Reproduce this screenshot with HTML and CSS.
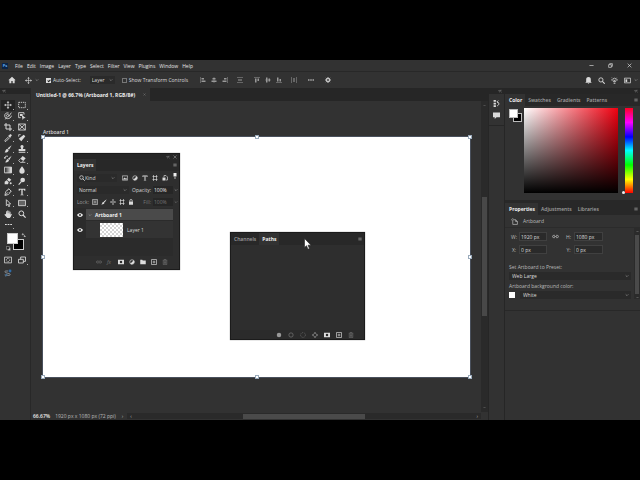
FILE: index.html
```html
<!DOCTYPE html>
<html lang="en">
<head>
<meta charset="UTF-8">
<meta name="viewport" content="width=device-width, initial-scale=1.0">
<title>Untitled-1 @ 66.7%</title>
<link rel="stylesheet" href="styles.css">
</head>
<body>
    <!-- icon set, 12x12 grid -->
    <svg class="sprite" aria-hidden="true">
        <symbol id="i-home" viewBox="0 0 12 12"><path fill="currentColor" d="M6 1L.5 6.5H2V11h3V7.500h2V11h3V6.500h1.500z"/></symbol>
        <symbol id="i-move" viewBox="0 0 12 12"><path fill="none" stroke="currentColor" d="M6 2v8M2 6h8"/><path fill="currentColor" d="M6 0l2 2.700H4zM6 12l2-2.700H4zM0 6l2.700-2v4zM12 6L9.300 4v4z"/></symbol>
        <symbol id="i-down" viewBox="0 0 12 12"><path fill="none" stroke="currentColor" stroke-width="1.800" d="M2 4l4 4 4-4"/></symbol>
        <symbol id="i-align-left" viewBox="0 0 12 12"><path fill="currentColor" d="M1 0h1v12H1zM3 2h5v3H3zM3 7h8v3H3z"/></symbol>
        <symbol id="i-align-center" viewBox="0 0 12 12"><path fill="currentColor" d="M5.500 0h1v12h-1zM3 2h6v3H3zM1 7h10v3H1z"/></symbol>
        <symbol id="i-align-right" viewBox="0 0 12 12"><path fill="currentColor" d="M10 0h1v12h-1zM4 2h5v3H4zM1 7h8v3H1z"/></symbol>
        <symbol id="i-spread" viewBox="0 0 12 12"><path fill="currentColor" d="M0 1h12v1H0zM2 5h8v2H2zM0 10h12v1H0z"/></symbol>
        <symbol id="i-align-top" viewBox="0 0 12 12"><path fill="currentColor" d="M0 1h12v1H0zM2 3h3v8H2zM7 3h3v5H7z"/></symbol>
        <symbol id="i-align-middle" viewBox="0 0 12 12"><path fill="currentColor" d="M0 5.500h12v1H0zM2 1h3v10H2zM7 3h3v6H7z"/></symbol>
        <symbol id="i-align-bottom" viewBox="0 0 12 12"><path fill="currentColor" d="M0 10h12v1H0zM2 1h3v8H2zM7 4h3v5H7z"/></symbol>
        <symbol id="i-spread-h" viewBox="0 0 12 12"><path fill="currentColor" d="M1 0h1v12H1zM5 2h2v8H5zM10 0h1v12h-1z"/></symbol>
        <symbol id="i-dots" viewBox="0 0 12 12"><path fill="currentColor" d="M0 5h3v2H0zM4.500 5h3v2h-3zM9 5h3v2H9z"/></symbol>
        <symbol id="i-gear" viewBox="0 0 12 12"><circle cx="6" cy="6" r="3" fill="none" stroke="currentColor" stroke-width="2"/><path stroke="currentColor" stroke-width="1.800" d="M6 0v2.500M6 9.500V12M0 6h2.500M9.500 6H12M1.800 1.800l1.700 1.700M8.500 8.500l1.700 1.700M10.200 1.800L8.500 3.500M3.500 8.500l-1.700 1.700"/></symbol>
        <symbol id="i-bell" viewBox="0 0 12 12"><path fill="currentColor" d="M6 0c3 0 4 2 4 4.500V8l1.500 2H.5L2 8V4.500C2 2 3 0 6 0zM4.500 10.500h3L6 12z"/></symbol>
        <symbol id="i-search" viewBox="0 0 12 12"><circle cx="5" cy="5" r="3.600" fill="none" stroke="currentColor" stroke-width="1.500"/><path stroke="currentColor" stroke-width="1.800" d="M7.500 7.500l4 4"/></symbol>
        <symbol id="i-bulb" viewBox="0 0 12 12"><path fill="none" stroke="currentColor" stroke-width="1.300" d="M4.500 8.500c0-1-1.500-2-1.500-3.500a3 3 0 016 0c0 1.500-1.500 2.500-1.500 3.500zM4.500 11h3M6 8V5M0 5h1.500M10.500 5H12M1.500 1l1 1M10.500 1l-1 1"/></symbol>
        <symbol id="i-layout" viewBox="0 0 12 12"><path fill="none" stroke="currentColor" stroke-width="1.300" d="M.7 2h10.600v8H.7z"/><path fill="currentColor" d="M2.500 4h3v4.500h-3z"/></symbol>
        <symbol id="i-min" viewBox="0 0 12 12"><path fill="currentColor" d="M1 5.500h10V7H1z"/></symbol>
        <symbol id="i-restore" viewBox="0 0 12 12"><path fill="none" stroke="currentColor" stroke-width="1.500" d="M1.500 4H8v6.500H1.500zM4 4V1.500h6.500V8H8"/></symbol>
        <symbol id="i-close" viewBox="0 0 12 12"><path stroke="currentColor" stroke-width="1.500" d="M1.500 1.500l9 9M10.500 1.500l-9 9"/></symbol>
        <symbol id="i-menu" viewBox="0 0 12 12"><path fill="currentColor" d="M1 2h10v1.500H1zM1 5.300h10v1.500H1zM1 8.600h10v1.500H1z"/></symbol>
        <symbol id="i-arrows" viewBox="0 0 12 12"><path fill="none" stroke="currentColor" stroke-width="1.600" d="M5.500 2.500L2 6l3.500 3.500M10.500 2.500L7 6l3.500 3.500"/></symbol>

        <symbol id="i-marquee" viewBox="0 0 12 12"><path fill="none" stroke="currentColor" stroke-width="1.300" stroke-dasharray="2 1.200" d="M1 2h10v8H1z"/></symbol>
        <symbol id="i-lasso" viewBox="0 0 12 12"><path fill="none" stroke="currentColor" stroke-width="1.300" d="M7 1.500C3 .5 1 3 1 5.500S3 10 5 10c3 0 6-1.500 6-4.500M3 6c1-3 4-3 4-1S5 8 4 7M7 7l4-6M4 8l-2 3"/></symbol>
        <symbol id="i-select" viewBox="0 0 12 12"><path fill="none" stroke="currentColor" stroke-width="1.300" d="M4 8.500H1V1h8v3"/><path fill="currentColor" d="M3 3h4v3H3zM5.500 4l6 5-3 .4L7 12z"/></symbol>
        <symbol id="i-crop" viewBox="0 0 12 12"><path fill="none" stroke="currentColor" stroke-width="1.500" d="M3 0v9h9M0 3h9v9"/></symbol>
        <symbol id="i-frame" viewBox="0 0 12 12"><path fill="none" stroke="currentColor" stroke-width="1.300" d="M1 1.500h10v9H1zM1 1.500l10 9M11 1.500l-10 9"/></symbol>
        <symbol id="i-dropper" viewBox="0 0 12 12"><path fill="none" stroke="currentColor" stroke-width="1.300" d="M7 4L1.500 9.500V11H3l5.500-5.500"/><path fill="currentColor" d="M6 2.500l1.500-.2L9 .5c1.500-.7 3 1 2.500 2L9.700 4.500 9.500 6z"/></symbol>
        <symbol id="i-heal" viewBox="0 0 12 12"><path fill="currentColor" d="M8.500 1l2.500 2.500L5 11 1 7z"/><path fill="none" stroke="currentColor" stroke-width="1.200" d="M1 4V1h3"/></symbol>
        <symbol id="i-brush" viewBox="0 0 12 12"><path fill="currentColor" d="M11.500.5L7.500 7 5.500 5zM4.800 5.500L7 7.700C6.500 10.500 3.500 11.500.5 11c2-1 1.500-4.500 4.300-5.500z"/></symbol>
        <symbol id="i-stamp" viewBox="0 0 12 12"><path fill="currentColor" d="M6 0a2.300 2.300 0 012 3.500L7.300 6H11v3H1V6h3.700L4 3.500A2.300 2.300 0 016 0zM1 10h10v1.500H1z"/></symbol>
        <symbol id="i-history" viewBox="0 0 12 12"><path fill="currentColor" d="M11.500 1L8 7.500 6 5.700zM5.500 6L7.500 8c-.5 2.500-3 3.500-6 3 2-1 1.500-4 4-5z"/><path fill="none" stroke="currentColor" stroke-width="1.300" d="M1 5c0-3 3-4 5-3M0 3l1 2 2-1"/></symbol>
        <symbol id="i-eraser" viewBox="0 0 12 12"><path fill="currentColor" d="M7 1.500L11.500 5 8 9 3.500 5.500z"/><path fill="none" stroke="currentColor" stroke-width="1.200" d="M3.500 5.500L1 8.500 3.500 11H6l2-2M6 11h5"/></symbol>
        <linearGradient id="grad"><stop stop-color="#222"/><stop offset="1" stop-color="#eee"/></linearGradient>
        <symbol id="i-gradient" viewBox="0 0 12 12"><path fill="url(#grad)" stroke="currentColor" stroke-width="1.300" d="M.7 1.700h10.600v8.600H.7z"/></symbol>
        <symbol id="i-drop" viewBox="0 0 12 12"><path fill="currentColor" d="M6 .5c2 3 4 4.500 4 7a4 4 0 01-8 0c0-2.500 2-4 4-7z"/></symbol>
        <symbol id="i-bucket" viewBox="0 0 12 12"><path fill="currentColor" d="M7 1L4.500 4 8 7l3-3zM1 7l3-2 3 3-1 3H1z"/><circle cx="10" cy="9.500" r="1.500" fill="currentColor"/></symbol>
        <symbol id="i-dodge" viewBox="0 0 12 12"><circle cx="7" cy="4.500" r="3.500" fill="currentColor"/><path stroke="currentColor" stroke-width="1.600" d="M5 7l-4 4.500"/></symbol>
        <symbol id="i-pen" viewBox="0 0 12 12"><path fill="none" stroke="currentColor" stroke-width="1.300" d="M7 1l4 4-2 1c0 3-3 4.500-7.500 5C2 7 3 3 6 3zM1.500 11L6 6.500"/></symbol>
        <symbol id="i-type" viewBox="0 0 12 12"><path fill="currentColor" d="M1 1h10v3H9.500L9 2.500H7v7.500l1.500.3V11h-5v-.7L5 10V2.500H3L2.500 4H1z"/></symbol>
        <symbol id="i-path" viewBox="0 0 12 12"><path fill="none" stroke="currentColor" stroke-width="1.300" d="M3.500 1v9l2-2 1.500 3.500L8.500 11 7 7.500h3z"/></symbol>
        <symbol id="i-rect" viewBox="0 0 12 12"><path fill="#666" stroke="currentColor" stroke-width="1.300" d="M.7 2h10.600v8H.7z"/></symbol>
        <symbol id="i-hand" viewBox="0 0 12 12"><path fill="currentColor" d="M3 6V2h1.300v3h.5V.7h1.400V5h.5V1H8v4.300h.5V2.500h1.300V7l1-1.500 1 .7L10 10.500 8.500 12H5L.5 7l1-.8z"/></symbol>
        <symbol id="i-mask" viewBox="0 0 12 12"><path fill="none" stroke="currentColor" stroke-width="1.200" d="M.7 1.700h10.600v8.600H.7z"/><circle cx="6" cy="6" r="2.500" fill="none" stroke="currentColor" stroke-width="1.200" stroke-dasharray="1.500 .8"/></symbol>
        <symbol id="i-screen" viewBox="0 0 12 12"><path fill="none" stroke="currentColor" stroke-width="1.300" d="M4 5V1.500h7.300V8H8M.7 5H8v5.500H.7z"/></symbol>
        <symbol id="i-share" viewBox="0 0 12 12"><path fill="none" stroke="#9aa0a6" stroke-width="1.200" d="M6 3H2.500C1 3 1 5 2.500 5.500L8 7c2 .6 1.500 2.500 0 2.500H4M1 9l2 2"/><circle cx="9" cy="3" r="2.200" fill="#2f6ca8"/><circle cx="3.500" cy="9" r="1.800" fill="#456d92"/></symbol>
        <symbol id="i-swap" viewBox="0 0 12 12"><path fill="none" stroke="currentColor" stroke-width="1.500" d="M3 3c4 0 6 2 6 6M5 .5L2.500 3 5 5.500M6.500 7L9 9.500 11.500 7"/></symbol>
        <symbol id="i-default" viewBox="0 0 12 12"><path fill="#ddd" stroke="#222" d="M4 4h7v7H4z"/><path fill="#222" stroke="#ddd" d="M1 1h7v7H1z"/></symbol>

        <symbol id="i-image" viewBox="0 0 12 12"><path fill="none" stroke="currentColor" stroke-width="1.300" d="M.7 1.700h10.600v8.600H.7z"/><path fill="currentColor" d="M2 9l2.500-4L7 7l1.500-1.500L10 9z"/></symbol>
        <symbol id="i-adjust" viewBox="0 0 12 12"><circle cx="6" cy="6" r="4.500" fill="none" stroke="currentColor" stroke-width="1.300"/><path fill="currentColor" d="M9.500 2.500a5 5 0 01-7 7z"/></symbol>
        <symbol id="i-shape" viewBox="0 0 12 12"><path fill="none" stroke="currentColor" stroke-width="1.300" d="M3 0v12M9 0v12M1 3h10M1 9h10"/></symbol>
        <symbol id="i-smart" viewBox="0 0 12 12"><path fill="none" stroke="currentColor" stroke-width="1.300" d="M4 4V1h4l3 3v6H8"/><path fill="currentColor" d="M1 5h6v6H1z"/></symbol>
        <symbol id="i-toggle" viewBox="0 0 12 12"><path fill="#eee" d="M3 0h6v7H3z"/><path fill="#888" d="M4.500 7h3v5h-3z"/></symbol>
        <symbol id="i-grid" viewBox="0 0 12 12"><path fill="none" stroke="currentColor" stroke-width="1.200" d="M1 1h10v10H1z"/><path fill="currentColor" d="M3 3h2v2H3zM7 3h2v2H7zM5 5h2v2H5zM3 7h2v2H3zM7 7h2v2H7z"/></symbol>
        <symbol id="i-lock" viewBox="0 0 12 12"><path fill="none" stroke="currentColor" stroke-width="1.500" d="M3.500 5V3.500a2.500 2.500 0 015 0V5"/><path fill="currentColor" d="M2 5h8v6.500H2z"/></symbol>
        <symbol id="i-eye" viewBox="0 0 12 12"><path fill="currentColor" d="M0 6c3-5 9-5 12 0-3 5-9 5-12 0z"/><circle cx="6" cy="6" r="2.200" fill="#222"/><circle cx="6" cy="6" r=".8" fill="currentColor"/></symbol>
        <symbol id="i-link" viewBox="0 0 12 12"><path fill="none" stroke="currentColor" stroke-width="1.300" d="M5 8H3a2 2 0 010-4h2M7 4h2a2 2 0 010 4H7M4 6h4"/></symbol>
        <symbol id="i-addmask" viewBox="0 0 12 12"><path fill="currentColor" fill-rule="evenodd" d="M0 1.500h12v9H0zM6 3.500a2.500 2.500 0 100 5 2.500 2.500 0 000-5z"/></symbol>
        <symbol id="i-folder" viewBox="0 0 12 12"><path fill="currentColor" d="M.5 1.500h4l1 1.500h6v7.500H.5z"/></symbol>
        <symbol id="i-new" viewBox="0 0 12 12"><path fill="none" stroke="currentColor" stroke-width="1.300" d="M1 1h10v10H1zM6 3.300v5.400M3.300 6h5.400"/></symbol>
        <symbol id="i-trash" viewBox="0 0 12 12"><path fill="none" stroke="currentColor" stroke-width="1.200" d="M1.500 2.500h9M4.500 2.500V1h3v1.500M2.500 3v8.300h7V3M5 4.500v5M7 4.500v5"/></symbol>
        <symbol id="i-dot" viewBox="0 0 12 12"><circle cx="6" cy="6" r="4.500" fill="currentColor"/></symbol>
        <symbol id="i-ring" viewBox="0 0 12 12"><circle cx="6" cy="6" r="4.300" fill="none" stroke="currentColor" stroke-width="1.400"/></symbol>
        <symbol id="i-dashring" viewBox="0 0 12 12"><circle cx="6" cy="6" r="4.800" fill="none" stroke="currentColor" stroke-width="1.200" stroke-dasharray="2.200 1.500"/></symbol>
        <symbol id="i-workpath" viewBox="0 0 12 12"><path fill="none" stroke="currentColor" stroke-width="1.500" d="M6 1.500L10.500 6 6 10.500 1.500 6zM6 0v2M6 10v2M0 6h2M10 6h2"/></symbol>
        <symbol id="i-artboard" viewBox="0 0 12 12"><path fill="none" stroke="currentColor" stroke-width="1.200" d="M3 3h5l3 3v5H3zM8 3v3h3M0 3h1.500M3 0v1.500"/></symbol>
        <symbol id="i-steps" viewBox="0 0 12 12"><path fill="currentColor" d="M1 0h4v3H1zM1 4.500h4v3H1zM1 9h4v3H1z"/><path fill="none" stroke="currentColor" stroke-width="1.500" d="M7 10c4-1 4-6 0-7M9 1L7 3l2 2.500"/></symbol>
        <symbol id="i-comment" viewBox="0 0 12 12"><path fill="currentColor" d="M0 1h12v8H6l-3 3V9H0z"/></symbol>
    </svg>

    <div class="app">
        <header class="menubar">
            <span class="logo">Ps</span>
            <nav>
                <button>File</button><button>Edit</button><button>Image</button><button>Layer</button><button>Type</button><button>Select</button><button>Filter</button><button>View</button><button>Plugins</button><button>Window</button><button>Help</button>
            </nav>
            <div class="window-buttons">
                <button aria-label="Minimize"><svg><use href="#i-min"/></svg></button>
                <button aria-label="Restore"><svg><use href="#i-restore"/></svg></button>
                <button aria-label="Close"><svg><use href="#i-close"/></svg></button>
            </div>
        </header>

        <div class="options">
            <button class="home" aria-label="Home"><svg><use href="#i-home"/></svg></button>
            <button class="tool-preset" aria-label="Move tool"><svg><use href="#i-move"/></svg><svg class="chev"><use href="#i-down"/></svg></button>
            <label class="check"><input type="checkbox" checked>Auto-Select:</label>
            <div class="select auto"><select aria-label="Auto-select target"><option>Layer</option></select><svg class="chev"><use href="#i-down"/></svg></div>
            <label class="check transform"><input type="checkbox">Show Transform Controls</label>
            <div class="aligns">
                <button aria-label="Align left"><svg><use href="#i-align-left"/></svg></button>
                <button aria-label="Align centers"><svg><use href="#i-align-center"/></svg></button>
                <button aria-label="Align right"><svg><use href="#i-align-right"/></svg></button>
                <button class="group" aria-label="Distribute"><svg><use href="#i-spread"/></svg></button>
                <button class="group wide" aria-label="Align top"><svg><use href="#i-align-top"/></svg></button>
                <button aria-label="Align middle"><svg><use href="#i-align-middle"/></svg></button>
                <button aria-label="Align bottom"><svg><use href="#i-align-bottom"/></svg></button>
                <button class="group" aria-label="Distribute horizontally"><svg><use href="#i-spread-h"/></svg></button>
                <button class="wide bright" aria-label="More"><svg><use href="#i-dots"/></svg></button>
                <button class="wide bright" aria-label="Settings"><svg><use href="#i-gear"/></svg></button>
            </div>
            <div class="options-right">
                <button aria-label="Notifications"><svg><use href="#i-bell"/></svg></button>
                <button aria-label="Search"><svg><use href="#i-search"/></svg></button>
                <button aria-label="Discover"><svg><use href="#i-bulb"/></svg></button>
                <button aria-label="Workspace"><svg><use href="#i-layout"/></svg></button>
                <svg class="chev"><use href="#i-down"/></svg>
            </div>
        </div>

        <div class="workspace">
            <aside class="toolbox">
                <div class="strip"><svg><use href="#i-arrows"/></svg></div>
                <div class="tools">
                    <button class="active" aria-label="Move"><svg><use href="#i-move"/></svg></button>
                    <button aria-label="Marquee"><svg><use href="#i-marquee"/></svg></button>
                    <button aria-label="Lasso"><svg><use href="#i-lasso"/></svg></button>
                    <button aria-label="Object selection"><svg><use href="#i-select"/></svg></button>
                    <button aria-label="Crop"><svg><use href="#i-crop"/></svg></button>
                    <button class="single" aria-label="Frame"><svg><use href="#i-frame"/></svg></button>
                    <button aria-label="Eyedropper"><svg><use href="#i-dropper"/></svg></button>
                    <button aria-label="Healing brush"><svg><use href="#i-heal"/></svg></button>
                    <button aria-label="Brush"><svg><use href="#i-brush"/></svg></button>
                    <button aria-label="Clone stamp"><svg><use href="#i-stamp"/></svg></button>
                    <button aria-label="History brush"><svg><use href="#i-history"/></svg></button>
                    <button aria-label="Eraser"><svg><use href="#i-eraser"/></svg></button>
                    <button aria-label="Gradient"><svg><use href="#i-gradient"/></svg></button>
                    <button aria-label="Blur"><svg><use href="#i-drop"/></svg></button>
                    <button aria-label="Paint bucket"><svg><use href="#i-bucket"/></svg></button>
                    <button aria-label="Dodge"><svg><use href="#i-dodge"/></svg></button>
                    <button aria-label="Pen"><svg><use href="#i-pen"/></svg></button>
                    <button aria-label="Type"><svg><use href="#i-type"/></svg></button>
                    <button aria-label="Path selection"><svg><use href="#i-path"/></svg></button>
                    <button aria-label="Rectangle"><svg><use href="#i-rect"/></svg></button>
                    <button aria-label="Hand"><svg><use href="#i-hand"/></svg></button>
                    <button class="single" aria-label="Zoom"><svg><use href="#i-search"/></svg></button>
                </div>
                <button class="more-tools" aria-label="Edit toolbar"><svg><use href="#i-dots"/></svg></button>
                <div class="colors">
                    <span class="bg"></span><span class="fg"></span>
                    <svg class="swap"><use href="#i-swap"/></svg>
                    <svg class="default"><use href="#i-default"/></svg>
                </div>
                <div class="modes">
                    <button class="single" aria-label="Quick mask"><svg><use href="#i-mask"/></svg></button>
                    <button aria-label="Screen mode"><svg><use href="#i-screen"/></svg></button>
                    <button class="single" aria-label="Share"><svg><use href="#i-share"/></svg></button>
                </div>
            </aside>

            <main class="document">
                <div class="doc-tabs"><button class="doc-tab">Untitled-1 @ 66.7% (Artboard 1, RGB/8#)<svg><use href="#i-close"/></svg></button></div>
                <div class="view">
                    <div class="canvas">
                        <div class="artboard">
                            <span class="artboard-name">Artboard 1</span>
                            <i class="handle tl"></i><i class="handle tc"></i><i class="handle tr"></i>
                            <i class="handle ml"></i><i class="handle mr"></i>
                            <i class="handle bl"></i><i class="handle bc"></i><i class="handle br"></i>
                        </div>
                    </div>
                    <div class="vscroll"><span class="thumb"></span><svg class="up"><use href="#i-down"/></svg><svg class="down"><use href="#i-down"/></svg></div>
                </div>
                <footer class="status">
                    <b>66.67%</b><span class="doc-size">1920 px x 1080 px (72 ppi)</span><span class="more">&rsaquo;</span>
                    <div class="hscroll"><span>&lsaquo;</span><i class="thumb"></i><span>&rsaquo;</span></div>
                </footer>

                <section class="floating layers">
                    <div class="titlebar"><svg><use href="#i-arrows"/></svg><svg><use href="#i-close"/></svg></div>
                    <div class="tabs"><button class="tab current">Layers</button><svg class="menu"><use href="#i-menu"/></svg></div>
                    <div class="layer-row filter">
                        <div class="select kind"><svg><use href="#i-search"/></svg><select aria-label="Filter"><option>Kind</option></select><svg class="chev"><use href="#i-down"/></svg></div>
                        <svg><use href="#i-image"/></svg><svg><use href="#i-adjust"/></svg><svg><use href="#i-type"/></svg><svg><use href="#i-shape"/></svg><svg><use href="#i-smart"/></svg><svg class="toggle"><use href="#i-toggle"/></svg>
                    </div>
                    <div class="layer-row">
                        <div class="select blend"><select aria-label="Blend mode"><option>Normal</option></select><svg class="chev"><use href="#i-down"/></svg></div>
                        <label class="right" for="opacity">Opacity:</label><input class="percent" id="opacity" value="100%"><svg class="chev"><use href="#i-down"/></svg>
                    </div>
                    <div class="layer-row locks">
                        <span class="lock-label">Lock:</span>
                        <svg><use href="#i-grid"/></svg><svg><use href="#i-brush"/></svg><svg><use href="#i-move"/></svg><svg><use href="#i-shape"/></svg><svg><use href="#i-lock"/></svg>
                        <label class="right dim" for="fill">Fill:</label><input class="percent dim" id="fill" value="100%"><svg class="chev dim"><use href="#i-down"/></svg>
                    </div>
                    <ul class="layer-list">
                        <li class="group-row"><svg class="eye"><use href="#i-eye"/></svg><div class="layer-name"><svg class="chev"><use href="#i-down"/></svg><b>Artboard 1</b></div></li>
                        <li class="child-row"><svg class="eye"><use href="#i-eye"/></svg><div class="layer-name"><span class="thumbnail"></span>Layer 1</div></li>
                    </ul>
                    <div class="panel-footer">
                        <svg class="dim"><use href="#i-link"/></svg><em class="dim">fx</em><svg><use href="#i-addmask"/></svg><svg><use href="#i-adjust"/></svg><svg><use href="#i-folder"/></svg><svg><use href="#i-new"/></svg><svg class="dim"><use href="#i-trash"/></svg>
                    </div>
                </section>

                <section class="floating paths">
                    <div class="tabs"><button class="tab">Channels</button><button class="tab current">Paths</button><svg class="menu"><use href="#i-menu"/></svg></div>
                    <div class="panel-footer">
                        <svg class="mid"><use href="#i-dot"/></svg><svg class="dim"><use href="#i-ring"/></svg><svg class="dim"><use href="#i-dashring"/></svg><svg class="mid"><use href="#i-workpath"/></svg><svg><use href="#i-addmask"/></svg><svg><use href="#i-new"/></svg><svg class="dim"><use href="#i-trash"/></svg>
                    </div>
                    <svg class="cursor" viewBox="0 0 8 12"><path fill="#fff" stroke="#222" stroke-width=".6" d="M.5.5v9l2-1.800L4 11.300l1.500-.7L4 7.200h3z"/></svg>
                </section>
            </main>

            <aside class="icon-dock">
                <div class="strip"><svg><use href="#i-arrows"/></svg></div>
                <div class="dock-icons">
                    <button aria-label="History"><svg><use href="#i-steps"/></svg></button>
                    <button aria-label="Comments"><svg><use href="#i-comment"/></svg></button>
                </div>
            </aside>

            <aside class="panels">
                <div class="strip"><svg><use href="#i-arrows"/></svg></div>
                <section class="color-panel">
                    <div class="tabs"><button class="tab current">Color</button><button class="tab">Swatches</button><button class="tab">Gradients</button><button class="tab">Patterns</button><svg class="menu"><use href="#i-menu"/></svg></div>
                    <div class="picker">
                        <div class="pair"><span class="bg"></span><span class="fg"></span></div>
                        <div class="field"></div>
                        <div class="hue"></div>
                    </div>
                </section>
                <section class="properties">
                    <div class="tabs"><button class="tab current">Properties</button><button class="tab">Adjustments</button><button class="tab">Libraries</button><svg class="menu"><use href="#i-menu"/></svg></div>
                    <div class="prop-title"><svg><use href="#i-artboard"/></svg>Artboard</div>
                    <div class="prop-body">
                        <div class="prop-fields">
                            <div class="size">
                                <label for="w">W:</label><input id="w" value="1920 px"><svg><use href="#i-link"/></svg><label for="h">H:</label><input id="h" value="1080 px">
                                <label for="x">X:</label><input id="x" value="0 px"><span></span><label for="y">Y:</label><input id="y" value="0 px">
                            </div>
                            <label for="preset">Set Artboard to Preset:</label>
                            <div class="select"><select id="preset"><option>Web Large</option></select><svg class="chev"><use href="#i-down"/></svg></div>
                            <label for="back">Artboard background color:</label>
                            <div class="back-row"><span class="chip"></span><div class="select"><select id="back"><option>White</option></select><svg class="chev"><use href="#i-down"/></svg></div></div>
                        </div>
                        <div class="prop-scroll"><svg class="up"><use href="#i-down"/></svg><span class="thumb"></span><svg><use href="#i-down"/></svg></div>
                    </div>
                </section>
            </aside>
        </div>
    </div>
</body>
</html>
```
FILE: styles.css
```css
* {
    box-sizing: border-box;
}
body {
    margin: 0;
    padding: 60px 0;
    min-height: 100vh;
    display: flex;
    background: #000;
    color: #dadada;
    font: 5px/8px "Open Sans", "Noto Sans", sans-serif;
}
button, input, select {
    margin: 0;
    padding: 0;
    border: none;
    border-radius: 0;
    background: none;
    color: inherit;
    font: inherit;
}
button {
    display: flex;
    align-items: center;
    justify-content: center;
}
svg {
    width: 7px;
    height: 7px;
    flex: none;
    display: block;
}
.sprite {
    position: absolute;
    width: 0;
    height: 0;
}
.chev {
    width: 4px;
    height: 4px;
    color: #999;
}
.dim {
    color: #777;
}
.mid {
    color: #999;
}
.up {
    transform: rotate(180deg);
}
.app {
    flex: 1;
    min-width: 0;
    display: flex;
    flex-direction: column;
    background: #323232;
}

/* menu bar */
.menubar {
    height: 11px;
    display: flex;
    align-items: center;
    padding: 0 8px 0 2px;
    color: #e4e4e4;
}
.menubar nav {
    display: flex;
    gap: 4px;
    margin-left: 7px;
}
.logo {
    width: 6px;
    height: 6px;
    background: #0b2447;
    color: #62a8ee;
    font-size: 4px;
    line-height: 6px;
    font-weight: bold;
    text-align: center;
}
.window-buttons {
    margin-left: auto;
    display: flex;
    gap: 14px;
}
.window-buttons svg {
    width: 5px;
    height: 5px;
}

/* tool options */
.options {
    height: 17px;
    display: flex;
    align-items: center;
    border-top: 1px solid #282828;
    padding: 0 2px 0 8px;
}
.home svg {
    width: 8px;
    height: 8px;
}
.tool-preset {
    margin-left: 9px;
    gap: 3px;
}
.check {
    display: flex;
    align-items: center;
    gap: 2px;
}
.tool-preset + .check {
    margin-left: 7px;
}
.transform {
    margin-left: 7px;
}
.check input {
    appearance: none;
    width: 5px;
    height: 5px;
    border: 1px solid #777;
}
.check input:checked {
    background: #ddd;
    border-color: #ddd;
    position: relative;
}
.check input:checked::after {
    content: "";
    position: absolute;
    left: 1px;
    top: 0;
    width: 1px;
    height: 2px;
    border: solid #222;
    border-width: 0 1px 1px 0;
    transform: rotate(45deg);
}
.select {
    display: flex;
    align-items: center;
    height: 8px;
    padding: 0 2px;
    background: #2a2a2a;
}
.select select {
    appearance: none;
    flex: 1;
    min-width: 0;
    height: 8px;
}
.auto {
    margin-left: 9px;
    width: 25px;
}
.aligns {
    display: flex;
    align-items: center;
    gap: 5px;
    margin-left: 12px;
    color: #999;
}
.aligns svg {
    width: 6px;
    height: 6px;
}
.aligns .group {
    margin-left: 4px;
}
.aligns .wide {
    margin-left: 6px;
}
.aligns .bright {
    color: #ddd;
}
.options-right {
    margin-left: auto;
    display: flex;
    align-items: center;
    gap: 6px;
}
.options-right .chev {
    margin-left: -3px;
}

/* main area */
.workspace {
    flex: 1;
    display: flex;
    min-height: 0;
}
.strip {
    height: 6px;
    display: flex;
    align-items: center;
    justify-content: flex-end;
    padding: 0 2px;
    background: #262626;
    color: #aaa;
}
.strip svg, .titlebar svg {
    width: 4px;
    height: 4px;
}
.toolbox {
    width: 31px;
    border-right: 1px solid #282828;
}
.toolbox .strip {
    justify-content: flex-start;
}
.tools, .modes {
    display: grid;
    grid-template-columns: 14px 14px;
    padding-left: 1px;
}
.tools {
    margin-top: 6px;
    height: 119px;
    grid-auto-rows: 1fr;
}
.tools svg, .modes svg {
    width: 8px;
    height: 8px;
}
.modes {
    grid-auto-rows: 13px;
}
.tools button, .modes button, .more-tools {
    position: relative;
}
.tools button::after, .modes button::after, .more-tools::after {
    content: "";
    position: absolute;
    right: 1px;
    bottom: 1px;
    width: 1px;
    height: 1px;
    background: #aaa;
}
.tools .single::after, .modes .single::after {
    display: none;
}
.tools .active {
    background: #242424;
}
.more-tools {
    width: 14px;
    height: 11px;
    margin-left: 1px;
}
.colors {
    position: relative;
    height: 23px;
}
.colors span {
    position: absolute;
    width: 11px;
    height: 11px;
    border: 1px solid #ccc;
}
.colors .fg {
    left: 7px;
    top: 3px;
    background: #fff;
}
.colors .bg {
    left: 13px;
    top: 9px;
    background: #000;
}
.colors svg {
    position: absolute;
    width: 5px;
    height: 5px;
}
.swap {
    left: 21px;
    top: 3px;
}
.default {
    left: 6px;
    top: 16px;
}

/* document window */
.document {
    flex: 1;
    min-width: 0;
    position: relative;
    display: flex;
    flex-direction: column;
}
.doc-tabs {
    display: flex;
    height: 13px;
    background: #262626;
}
.doc-tab {
    padding: 0 4px 0 5px;
    gap: 8px;
    background: #323232;
    color: #eee;
    font-weight: bold;
}
.doc-tab svg {
    width: 3px;
    height: 3px;
    color: #888;
}
.view {
    flex: 1;
    display: flex;
}
.canvas {
    flex: 1;
    display: flex;
    padding: 36px 11px 35px 12px;
}
.artboard {
    flex: 1;
    position: relative;
    background: #fff;
    outline: 1px solid #49505c;
}
.artboard-name {
    position: absolute;
    left: 0;
    top: -9px;
    font-weight: 600;
}
.handle {
    position: absolute;
    width: 4px;
    height: 4px;
    margin: -2px;
    background: #fff;
    border: 1px solid #9aabbc;
}
.tl, .tc, .tr {
    top: 0;
}
.ml, .mr {
    top: 50%;
}
.bl, .bc, .br {
    bottom: 0;
}
.tl, .ml, .bl {
    left: 0;
}
.tc, .bc {
    left: 50%;
}
.tr, .mr, .br {
    right: 0;
}
.vscroll {
    width: 7px;
    padding: 96px 1px 0;
    position: relative;
    background: #2a2a2a;
}
.vscroll .thumb {
    display: block;
    height: 119px;
    background: #484848;
}
.vscroll svg {
    position: absolute;
    left: 2px;
    width: 3px;
    height: 3px;
    color: #888;
}
.vscroll .up {
    top: 3px;
}
.vscroll .down {
    bottom: 3px;
}
.status {
    display: flex;
    align-items: center;
    height: 8px;
    padding: 0 7px 0 2px;
    color: #bbb;
}
.status b {
    color: #eee;
    font-weight: 600;
}
.doc-size {
    margin-left: 5px;
}
.status .more {
    margin: 0 4px 0 6px;
}
.hscroll {
    flex: 1;
    display: flex;
    justify-content: space-between;
    align-items: center;
    height: 6px;
    padding: 0 3px;
    background: #2a2a2a;
}
.hscroll .thumb {
    width: 35%;
    height: 5px;
    background: #4a4a4a;
}

/* tab rows shared by all panels */
.tabs {
    display: flex;
    height: 12px;
    background: #282828;
    color: #a0a0a0;
}
.tab {
    padding: 0 3px;
    font-weight: 600;
}
.tab.current {
    background: #323232;
    color: #eee;
    font-weight: bold;
}
.tabs .menu {
    width: 4px;
    height: 4px;
    margin: 4px 2px 0 auto;
}
.panels .tab:first-child {
    padding-left: 4px;
}

/* floating panels */
.floating {
    position: absolute;
    display: flex;
    flex-direction: column;
    border: 1px solid #1b1b1b;
    background: #2e2e2e;
    box-shadow: 0 0 1px #777;
}
.layers {
    left: 42px;
    top: 65px;
    width: 107px;
    height: 117px;
}
.paths {
    left: 199px;
    top: 144px;
    width: 135px;
    height: 108px;
}
.titlebar {
    display: flex;
    justify-content: flex-end;
    align-items: center;
    gap: 3px;
    height: 5px;
    padding-right: 2px;
    background: #262626;
    color: #aaa;
}
.layer-row {
    display: flex;
    align-items: center;
    height: 13px;
    padding: 0 3px;
}
.layer-row + .layer-row {
    height: 12px;
}
.filter svg {
    width: 6px;
    height: 6px;
    margin-right: 4px;
}
.filter .chev {
    width: 4px;
    height: 4px;
    margin-right: 0;
}
.filter .toggle {
    margin: 0 -2px 3px auto;
}
.kind {
    width: 40px;
    margin-right: 5px;
}
.kind svg {
    margin-right: 0;
}
.blend {
    width: 52px;
}
.right {
    margin-left: auto;
}
.percent {
    width: 20px;
    height: 8px;
    margin: 0 1px 0 2px;
    padding-left: 1px;
    background: #262626;
    color: #eee;
}
.percent.dim {
    color: #777;
}
.locks > svg {
    width: 6px;
    height: 6px;
    margin-right: 3px;
}
.locks .chev {
    width: 4px;
    margin-right: 0;
}
.lock-label {
    width: 15px;
    color: #999;
}
.locks .percent + svg, .layer-row .percent + svg {
    margin-right: -2px;
}
.layer-list {
    flex: 1;
    margin: 0 6px 0 0;
    padding: 1px 0 0;
    list-style: none;
    background: #2b2b2b;
}
.layer-list li {
    display: flex;
    align-items: center;
    margin-bottom: 1px;
}
.eye {
    width: 6px;
    height: 6px;
    margin: 0 3px;
    color: #eee;
}
.layer-name {
    flex: 1;
    display: flex;
    align-items: center;
    gap: 4px;
    height: 17px;
    padding-left: 14px;
    background: #333;
}
.group-row .layer-name {
    height: 11px;
    padding-left: 2px;
    gap: 3px;
    background: #4a4a4a;
    color: #eee;
}
.thumbnail {
    width: 23px;
    height: 14px;
    background: repeating-conic-gradient(#d4d4d4 0 25%, #fff 0 50%) 0 0 / 4px 4px;
}
.panel-footer {
    display: flex;
    align-items: center;
    justify-content: flex-end;
    gap: 5px;
    height: 11px;
    margin-top: auto;
    padding-right: 11px;
    color: #ddd;
}
.panel-footer svg, .panel-footer em {
    width: 6px;
    height: 6px;
}
.panel-footer em {
    line-height: 6px;
}
.layers .panel-footer {
    margin-bottom: 2px;
}
.paths .panel-footer {
    gap: 6px;
    height: 9px;
    padding-right: 10px;
    background: #2b2b2b;
}
.paths svg + svg + svg + svg {
    margin-right: -1px;
}
.paths .panel-footer svg {
    margin-right: 0;
}
.cursor {
    position: absolute;
    left: 73px;
    top: 5px;
    width: 8px;
    height: 12px;
}

/* icon dock */
.icon-dock {
    width: 17px;
    border: solid #262626;
    border-width: 0 1px;
}
.dock-icons {
    display: flex;
    flex-direction: column;
    align-items: center;
    gap: 5px;
    padding: 6px 0;
    border-bottom: 1px solid #262626;
}

/* right side panels */
.panels {
    width: 135px;
}
.color-panel {
    border-bottom: 3px solid #282828;
}
.picker {
    display: flex;
    padding: 2px 7px 7px 4px;
}
.pair {
    position: relative;
    width: 15px;
}
.pair span {
    position: absolute;
    width: 9px;
    height: 9px;
    border: 1px solid #bbb;
}
.pair .fg {
    left: 0;
    top: 1px;
    background: #fff;
}
.pair .bg {
    left: 4px;
    top: 5px;
    background: #000;
}
.field {
    flex: 1;
    height: 85px;
    background: linear-gradient(to top, #000, transparent), linear-gradient(to right, #fff, #f00010);
}
.hue {
    position: relative;
    width: 8px;
    margin-left: 7px;
    background: linear-gradient(#f02, #f0f 17%, #00f 34%, #0ff 50%, #0f0 67%, #ff0 84%, #f00);
}
.hue::after {
    content: "";
    position: absolute;
    left: -3px;
    bottom: -1px;
    width: 3px;
    height: 3px;
    border-radius: 50%;
    background: #eee;
}
.properties {
    border-bottom: 1px solid #282828;
    padding-bottom: 11px;
}
.prop-title {
    display: flex;
    align-items: center;
    gap: 5px;
    height: 13px;
    padding-left: 6px;
    border-bottom: 1px solid #2b2b2b;
    color: #bbb;
}
.prop-body {
    display: flex;
}
.prop-fields {
    flex: 1;
    padding: 4px 3px 0 4px;
}
.prop-fields > label {
    display: block;
    height: 9px;
    margin-top: 2px;
    color: #bbb;
}
.size {
    display: grid;
    grid-template-columns: 10px 28px 16px 11px 29px;
    row-gap: 4px;
    align-items: center;
    justify-items: center;
    margin-bottom: 9px;
    color: #bbb;
}
.size input {
    width: 100%;
    height: 9px;
    padding-left: 1px;
    border: 1px solid #404040;
    background: #2a2a2a;
    color: #ddd;
}
.prop-fields .select {
    flex: 1;
    height: 8px;
    padding-left: 3px;
}
.back-row {
    display: flex;
    align-items: center;
    gap: 5px;
}
.chip {
    width: 6px;
    height: 6px;
    background: #fff;
}
.prop-scroll {
    display: flex;
    flex-direction: column;
    align-items: center;
    gap: 2px;
    width: 6px;
    padding-top: 2px;
    background: #2b2b2b;
}
.prop-scroll svg {
    width: 3px;
    height: 3px;
    color: #999;
}
.prop-scroll .thumb {
    flex: 1;
    width: 4px;
    background: #4a4a4a;
}
```
